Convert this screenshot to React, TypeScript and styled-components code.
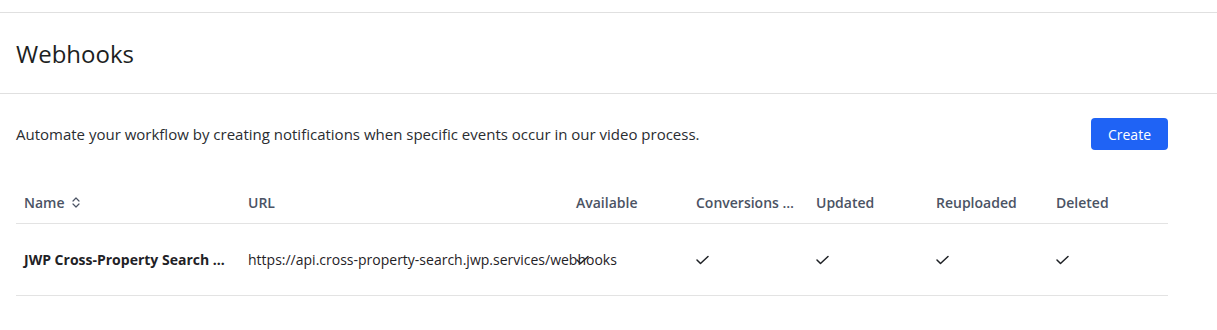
import React from 'react'
import styled, { createGlobalStyle } from 'styled-components'

const GlobalStyle = createGlobalStyle`
  *, *::before, *::after {
    box-sizing: border-box;
  }
  body {
    margin: 0;
    background: #ffffff;
    font-family: 'Open Sans', 'Noto Sans', sans-serif;
    color: #1f2329;
  }
`

const Page = styled.div`
  padding-top: 12px;
`

const TitleBar = styled.header`
  display: flex;
  align-items: center;
  height: 82px;
  padding: 0 16px;
  border-top: 1px solid #e0e0e0;
  border-bottom: 1px solid #e0e0e0;
`

const Title = styled.h1`
  margin: 0;
  font-size: 24px;
  font-weight: 400;
  color: #1d1f22;
`

const Content = styled.section`
  width: 1184px;
  padding: 24px 16px 0;
`

const IntroRow = styled.div`
  display: flex;
  align-items: center;
  justify-content: space-between;
`

const Intro = styled.p`
  margin: 0;
  font-size: 15px;
  color: #2a2d31;
`

const PrimaryButton = styled.button`
  width: 77px;
  height: 32px;
  padding: 0;
  border: none;
  border-radius: 4px;
  background: #1f63f5;
  color: #ffffff;
  font-family: inherit;
  font-size: 14px;
  font-weight: 500;
  cursor: pointer;
`

const Table = styled.table`
  width: 100%;
  margin-top: 33px;
  border-collapse: collapse;
  table-layout: fixed;
`

const HeadCell = styled.th<{ $width: number }>`
  width: ${p => p.$width}px;
  height: 40px;
  padding: 0 8px;
  text-align: left;
  font-size: 14px;
  font-weight: 600;
  color: #4b5364;
  border-bottom: 1px solid #e3e3e3;
  white-space: nowrap;
  overflow: hidden;
  text-overflow: ellipsis;
`

const Cell = styled.td<{ $bold?: boolean; $overflow?: boolean }>`
  height: 72px;
  padding: 0 8px;
  font-size: 14px;
  font-weight: ${p => (p.$bold ? 700 : 400)};
  color: #1f2226;
  border-bottom: 1px solid #e3e3e3;
  white-space: nowrap;
  overflow: ${p => (p.$overflow ? 'visible' : 'hidden')};
  text-overflow: ${p => (p.$overflow ? 'clip' : 'ellipsis')};
  position: relative;
  z-index: ${p => (p.$overflow ? 1 : 0)};
`

const SortLabel = styled.span`
  display: inline-flex;
  align-items: center;
  gap: 7px;
`

const SortIcon = () => (
  <svg width="8" height="11" viewBox="0 0 8 11" fill="none" stroke="#4b5364" strokeWidth="1.2" strokeLinecap="round" strokeLinejoin="round">
    <path d="M1 4 L4 1 L7 4" />
    <path d="M1 7 L4 10 L7 7" />
  </svg>
)

const Check = () => (
  <svg width="13" height="10" viewBox="0 0 13 10" fill="none" stroke="#1f2226" strokeWidth="1.5" strokeLinecap="round" strokeLinejoin="round">
    <path d="M1 5 L4.5 8.5 L12 1.5" />
  </svg>
)

const columns = [
  { key: 'url', label: 'URL', width: 328 },
  { key: 'available', label: 'Available', width: 120 },
  { key: 'conversions', label: 'Conversions completed', width: 120 },
  { key: 'updated', label: 'Updated', width: 120 },
  { key: 'reuploaded', label: 'Reuploaded', width: 120 },
  { key: 'deleted', label: 'Deleted', width: 120 },
]

const webhooks = [
  {
    name: 'JWP Cross-Property Search Webhook',
    url: 'https://api.cross-property-search.jwp.services/webhooks',
  },
]

export default function App() {
  return (
    <Page>
      <GlobalStyle />
      <TitleBar>
        <Title>Webhooks</Title>
      </TitleBar>
      <Content>
        <IntroRow>
          <Intro>
            Automate your workflow by creating notifications when specific events occur in our video process.
          </Intro>
          <PrimaryButton type="button">Create</PrimaryButton>
        </IntroRow>
        <Table>
          <thead>
            <tr>
              <HeadCell $width={224}>
                <SortLabel>
                  Name <SortIcon />
                </SortLabel>
              </HeadCell>
              {columns.map(col => (
                <HeadCell key={col.key} $width={col.width}>
                  {col.label}
                </HeadCell>
              ))}
            </tr>
          </thead>
          <tbody>
            {webhooks.map(hook => (
              <tr key={hook.url}>
                <Cell $bold>{hook.name}</Cell>
                <Cell $overflow>{hook.url}</Cell>
                <Cell><Check /></Cell>
                <Cell><Check /></Cell>
                <Cell><Check /></Cell>
                <Cell><Check /></Cell>
                <Cell><Check /></Cell>
              </tr>
            ))}
          </tbody>
        </Table>
      </Content>
    </Page>
  )
}
